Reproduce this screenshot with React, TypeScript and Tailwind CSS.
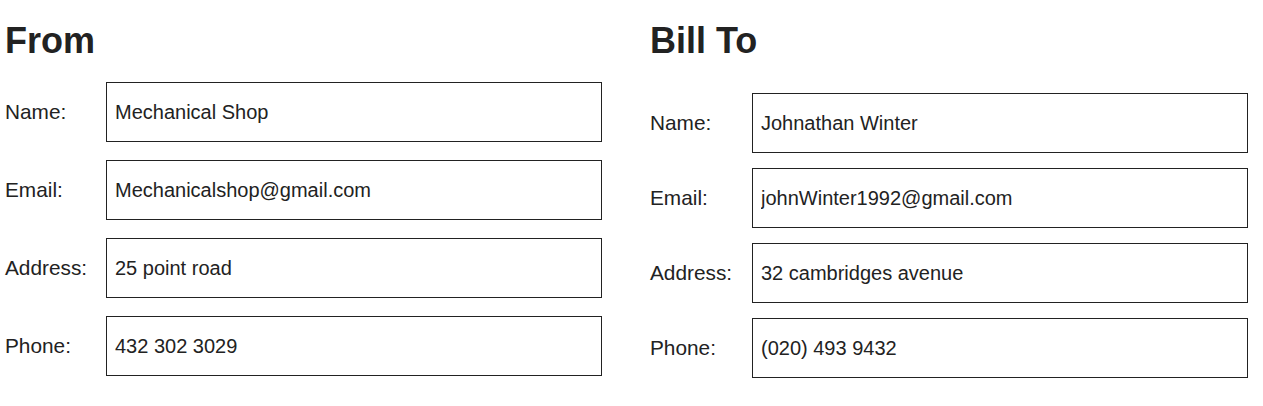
const from = [
  { label: 'Name:', value: 'Mechanical Shop' },
  { label: 'Email:', value: 'Mechanicalshop@gmail.com' },
  { label: 'Address:', value: '25 point road' },
  { label: 'Phone:', value: '432 302 3029' },
];

const billTo = [
  { label: 'Name:', value: 'Johnathan Winter' },
  { label: 'Email:', value: 'johnWinter1992@gmail.com' },
  { label: 'Address:', value: '32 cambridges avenue' },
  { label: 'Phone:', value: '(020) 493 9432' },
];

type Field = { label: string; value: string };

function Row({ field, labelWidth }: { field: Field; labelWidth: string }) {
  return (
    <div className="flex items-center">
      <label className={`${labelWidth} shrink-0 text-[20.8px] leading-6 text-[#222]`}>{field.label}</label>
      <input
        type="text"
        defaultValue={field.value}
        className="h-[60px] w-[496px] border border-[#222] px-2 text-[20px] text-[#222] outline-none"
      />
    </div>
  );
}

export default function App() {
  return (
    <div
      className="flex gap-[48px] bg-white pl-[5px] pt-[21px] min-h-[406px]"
      style={{ fontFamily: '"Liberation Sans", Arial, sans-serif' }}
    >
      <section className="w-[597px]">
        <h2 className="text-[36px] leading-10 font-bold text-[#222]">From</h2>
        <div className="mt-[21px] flex flex-col gap-[18px]">
          {from.map((f) => (
            <Row key={f.label} field={f} labelWidth="w-[101px]" />
          ))}
        </div>
      </section>
      <section className="w-[598px]">
        <h2 className="text-[36px] leading-10 font-bold text-[#222]">Bill To</h2>
        <div className="mt-[32px] flex flex-col gap-[15px]">
          {billTo.map((f) => (
            <Row key={f.label} field={f} labelWidth="w-[102px]" />
          ))}
        </div>
      </section>
    </div>
  );
}
